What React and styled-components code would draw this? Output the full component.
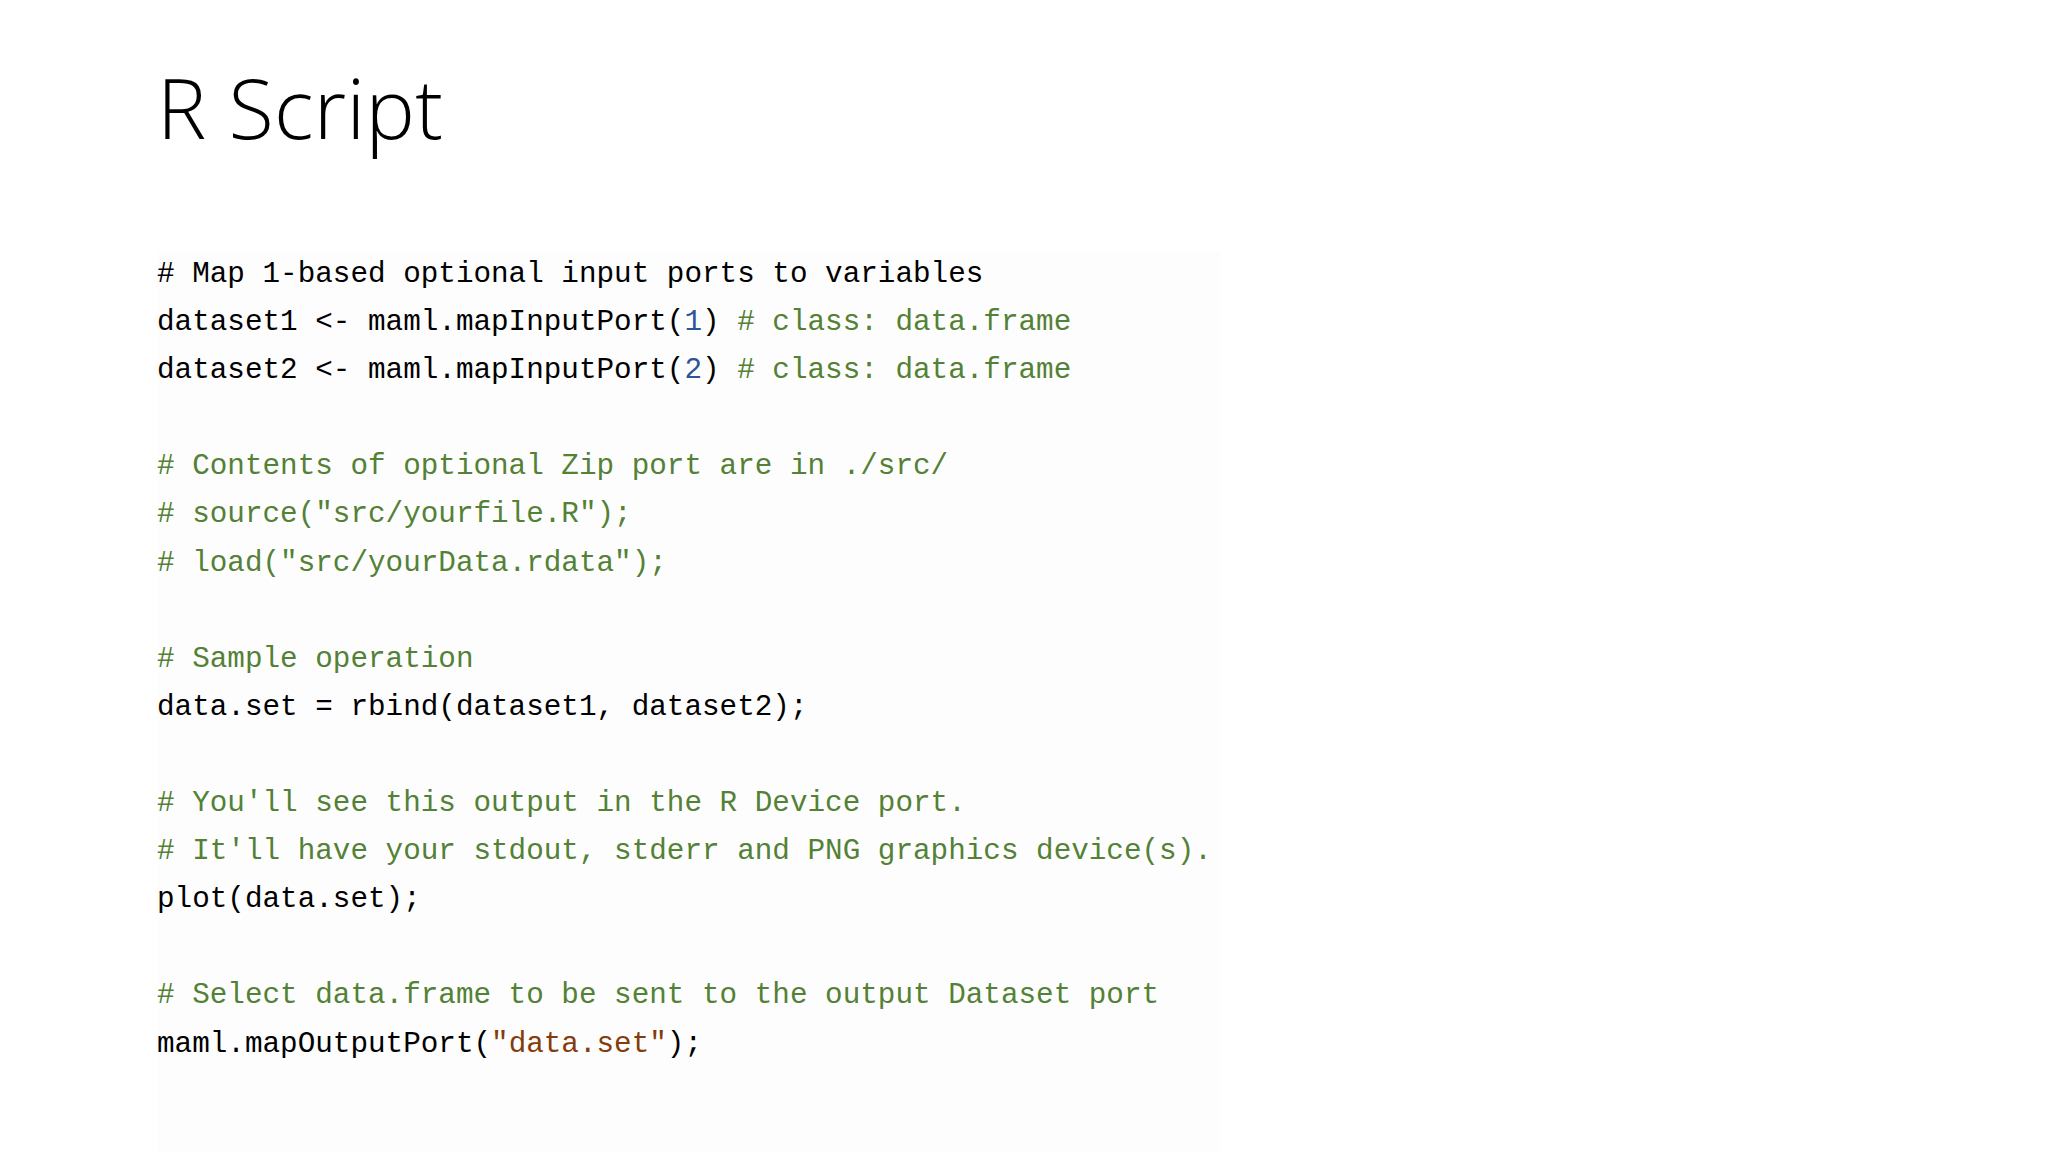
import React from "react";
import styled, { createGlobalStyle } from "styled-components";

const Global = createGlobalStyle`
  html, body { margin: 0; padding: 0; background: #ffffff; }
  body { width: 2048px; height: 1152px; overflow: hidden; }
`;

const Slide = styled.main`
  width: 2048px;
  height: 1152px;
  box-sizing: border-box;
  padding: 66px 0 0 157px;
  display: flex;
  flex-direction: column;
  background: #ffffff;
`;

const Title = styled.h1`
  margin: 0;
  font-family: "Open Sans", "Noto Sans", sans-serif;
  font-weight: 300;
  font-size: 83px;
  line-height: 82px;
  color: #000000;
  letter-spacing: 0.3px;
`;

const CodeBlock = styled.pre`
  margin: 103px 0 0 0;
  padding: 0 8px 0 0;
  align-self: flex-start;
  flex: 1;
  background: #fdfdfd;
  font-family: "Liberation Mono", "DejaVu Sans Mono", monospace;
  font-size: 29.3px;
  line-height: 48.1px;
  color: #000000;
  white-space: pre;
`;

const Line = styled.div`
  height: 48.1px;
`;

const Tok = styled.span`
  color: ${(p) =>
    p.$k === "c" ? "#538135" : p.$k === "n" ? "#2f5597" : p.$k === "s" ? "#843c0c" : "#000000"};
`;

const lines = [
  [["t", "# Map 1-based optional input ports to variables"]],
  [["t", "dataset1 <- maml.mapInputPort("], ["n", "1"], ["t", ") "], ["c", "# class: data.frame"]],
  [["t", "dataset2 <- maml.mapInputPort("], ["n", "2"], ["t", ") "], ["c", "# class: data.frame"]],
  [],
  [["c", "# Contents of optional Zip port are in ./src/"]],
  [["c", "# source(\"src/yourfile.R\");"]],
  [["c", "# load(\"src/yourData.rdata\");"]],
  [],
  [["c", "# Sample operation"]],
  [["t", "data.set = rbind(dataset1, dataset2);"]],
  [],
  [["c", "# You'll see this output in the R Device port."]],
  [["c", "# It'll have your stdout, stderr and PNG graphics device(s)."]],
  [["t", "plot(data.set);"]],
  [],
  [["c", "# Select data.frame to be sent to the output Dataset port"]],
  [["t", "maml.mapOutputPort("], ["s", "\"data.set\""], ["t", ");"]],
];

export default function App() {
  return (
    <>
      <Global />
      <Slide>
        <Title>R Script</Title>
        <CodeBlock>
          {lines.map((toks, i) => (
            <Line key={i}>
              {toks.map(([k, text], j) => (
                <Tok key={j} $k={k}>
                  {text}
                </Tok>
              ))}
            </Line>
          ))}
        </CodeBlock>
      </Slide>
    </>
  );
}
